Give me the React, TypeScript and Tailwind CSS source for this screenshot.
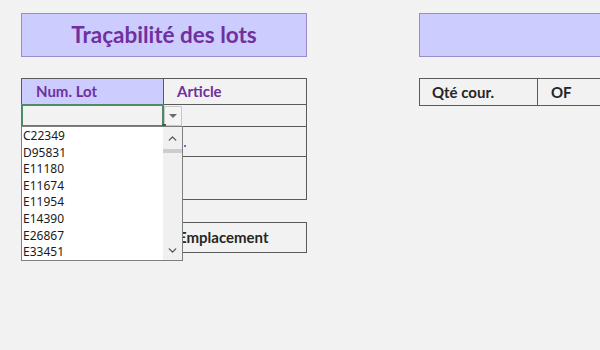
import { ChevronUp, ChevronDown } from 'lucide-react';

const lots = ['C22349', 'D95831', 'E11180', 'E11674', 'E11954', 'E14390', 'E26867', 'E33451'];

const font = "font-['Lato','Liberation_Sans',sans-serif]";

function LotDropdown() {
  return (
    <div className="absolute left-[21px] top-[126px] w-[162px] h-[135px] flex border border-[#7f7f7f] bg-white">
      {/* items */}
      <div className="flex-1 flex flex-col pt-[1px] overflow-hidden font-['Noto_Sans','Liberation_Sans',sans-serif] text-[12px] text-[#1a1a1a]">
        {lots.map((lot) => (
          <div key={lot} className="h-[16.6px] leading-[16.6px] pl-[1px] shrink-0">
            {lot}
          </div>
        ))}
      </div>
      {/* scrollbar */}
      <div className="w-[19px] bg-[#f0f0f0] flex flex-col items-center">
        <div className="h-[22px] flex items-center justify-center">
          <ChevronUp size={13} strokeWidth={2.5} className="text-[#555555]" />
        </div>
        <div className="w-full h-[4px] bg-[#cdcdcd]" />
        <div className="flex-1" />
        <div className="h-[20px] flex items-center justify-center">
          <ChevronDown size={13} strokeWidth={2.5} className="text-[#555555]" />
        </div>
      </div>
    </div>
  );
}

export default function App() {
  return (
    <div className={`relative w-[600px] h-[350px] overflow-hidden bg-[#f2f2f2] flex pt-[13px] ${font}`}>
      {/* Left block */}
      <div className="ml-[21px] w-[286px] flex flex-col">
        <div className="h-[44px] border border-[#9a8cc8] bg-[#ccccff] flex items-center justify-center">
          <span className="text-[22.5px] font-bold text-[#7030a0] leading-none">Traçabilité des lots</span>
        </div>

        <div className="mt-[21px] border border-[#5a5a5a] flex flex-col">
          <div className="h-[26px] flex border-b border-[#5a5a5a]">
            <div className="w-[142px] bg-[#ccccff] border-r border-[#5a5a5a] pl-[14px] flex items-center text-[15px] font-bold text-[#7030a0]">
              Num. Lot
            </div>
            <div className="flex-1 pl-[13px] flex items-center text-[15px] font-bold text-[#7030a0]">
              Article
            </div>
          </div>
          <div className="relative h-[22px] flex border-b border-[#5a5a5a]">
            <div className="w-[143px] -ml-[1px] -mt-[1px] h-[23px] border-2 border-[#4e8a63]" />
            <div className="relative w-[18px] h-[20px] mt-[1px] bg-[#f4f4f4] border border-[#c8c8c8] flex items-center justify-center">
              <svg width="8" height="5" viewBox="0 0 8 5">
                <path d="M0 0 L8 0 L4 4 Z" fill="#6b6b6b" />
              </svg>
            </div>
            <div className="absolute left-[140px] top-[19px] w-[4px] h-[4px] bg-[#2e6b47]" />
          </div>
          <div className="h-[30px] border-b border-[#5a5a5a] relative">
            <div className="absolute left-[162px] top-[18px] w-[2px] h-[2px] rounded-full bg-[#7030a0]" />
          </div>
          <div className="h-[42px]" />
        </div>

        <div className="mt-[22px] h-[31px] border border-[#5a5a5a] flex items-center pl-[156px] text-[15px] font-bold text-[#262626]">
          Emplacement
        </div>
      </div>

      {/* Right block */}
      <div className="ml-[112px] flex-1 flex flex-col">
        <div className="h-[44px] -mr-[2px] border border-[#9a8cc8] bg-[#ccccff]" />
        <div className="mt-[21px] -mr-[2px] h-[28px] border border-[#5a5a5a] flex">
          <div className="w-[118px] border-r border-[#5a5a5a] pl-[12px] flex items-center text-[15px] font-bold text-[#262626]">
            Qté cour.
          </div>
          <div className="flex-1 pl-[13px] flex items-center text-[15px] font-bold text-[#262626]">
            OF
          </div>
        </div>
      </div>

      <LotDropdown />
    </div>
  );
}
